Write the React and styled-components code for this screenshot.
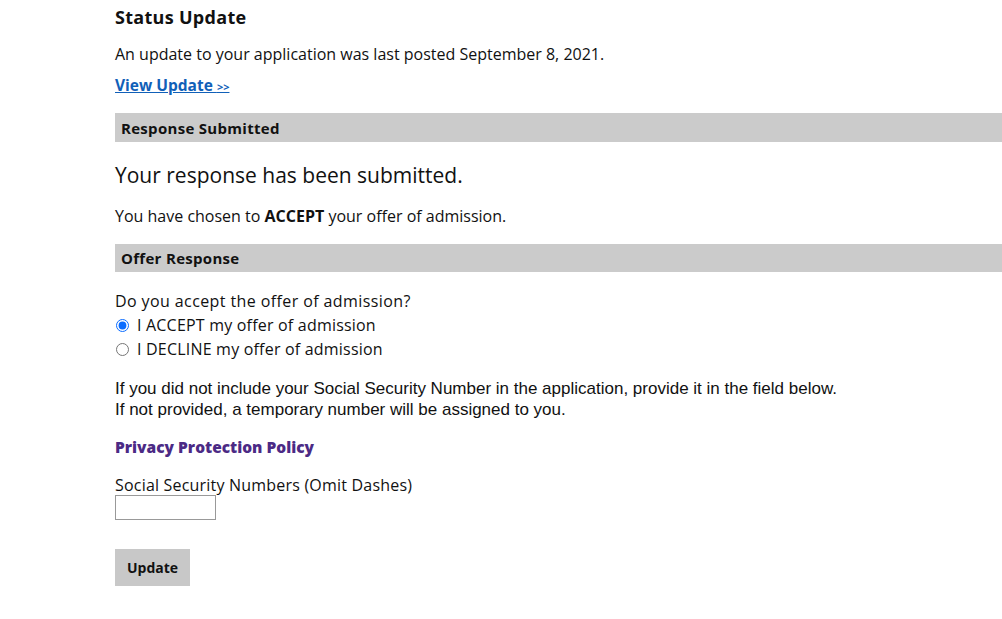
import React from "react";
import styled, { createGlobalStyle } from "styled-components";

const GlobalStyle = createGlobalStyle`
  body {
    margin: 0;
    background: #ffffff;
    color: #111111;
    font-family: "Open Sans", "DejaVu Sans", sans-serif;
  }
`;

const Page = styled.div`
  padding: 7px 0 30px 115px;
`;

const Heading = styled.h2`
  font-size: 18px;
  font-weight: 700;
  line-height: 20px;
  letter-spacing: 0.3px;
  margin: 0;
`;

const Text = styled.p`
  font-size: ${(p) => p.size || 16}px;
  line-height: ${(p) => p.lh || 20}px;
  letter-spacing: ${(p) => p.ls || 0}px;
  margin: ${(p) => p.top || 0}px 0 0 0;
`;

const Link = styled.a`
  display: block;
  margin-top: 11px;
  font-size: 15.5px;
  line-height: 20px;
  font-weight: 700;
  color: #1160b8;
  text-decoration: underline;
  cursor: pointer;

  span {
    font-size: 11px;
  }
`;

const SectionBar = styled.div`
  margin-top: ${(p) => p.top}px;
  height: ${(p) => p.h}px;
  background: #cbcbcb;
  display: flex;
  align-items: center;
  padding-left: 6px;
  font-size: 15px;
  letter-spacing: 0.3px;
  font-weight: 700;
`;

const Options = styled.div`
  display: flex;
  flex-direction: column;
  margin-top: 2px;
`;

const Option = styled.label`
  display: flex;
  align-items: center;
  gap: 8px;
  height: 24px;
  font-size: 16px;
  letter-spacing: 0.2px;

  input {
    margin: 0 0 0 1px;
    width: 13px;
    height: 13px;
    accent-color: #0a6cff;
  }
`;

const Narrow = styled.p`
  margin: 17px 0 0 0;
  font-family: "Liberation Sans", Arial, sans-serif;
  font-size: 17px;
  line-height: 21px;
`;

const Policy = styled.a`
  display: block;
  margin-top: 17px;
  font-size: 15.5px;
  line-height: 20px;
  font-weight: 800;
  color: #4b2a85;
  text-decoration: none;
  cursor: pointer;
`;

const Field = styled.input`
  display: block;
  box-sizing: border-box;
  width: 101px;
  height: 25px;
  margin: 0;
  border: 1px solid #999999;
  background: #ffffff;
`;

const Button = styled.button`
  display: block;
  margin-top: 29px;
  width: 75px;
  height: 37px;
  border: none;
  background: #c8c8c8;
  font-family: inherit;
  font-size: 14px;
  font-weight: 700;
  color: #111111;
`;

export default function App() {
  return (
    <Page>
      <GlobalStyle />
      <Heading>Status Update</Heading>
      <Text top={17}>
        An update to your application was last posted September 8, 2021.
      </Text>
      <Link>
        View Update <span>&gt;&gt;</span>
      </Link>

      <SectionBar top={16} h={29}>
        Response Submitted
      </SectionBar>
      <Text size={21} lh={26} top={20}>
        Your response has been submitted.
      </Text>
      <Text top={18}>
        You have chosen to <b>ACCEPT</b> your offer of admission.
      </Text>

      <SectionBar top={18} h={28}>
        Offer Response
      </SectionBar>
      <Text top={19} ls={0.4}>
        Do you accept the offer of admission?
      </Text>
      <Options>
        <Option>
          <input type="radio" name="offer" defaultChecked />I ACCEPT my offer of
          admission
        </Option>
        <Option>
          <input type="radio" name="offer" />I DECLINE my offer of admission
        </Option>
      </Options>
      <Narrow>
        If you did not include your Social Security Number in the application,
        provide it in the field below.
        <br />
        If not provided, a temporary number will be assigned to you.
      </Narrow>
      <Policy>Privacy Protection Policy</Policy>
      <Text top={18} ls={0.2}>
        Social Security Numbers (Omit Dashes)
      </Text>
      <Field type="text" />
      <Button>Update</Button>
    </Page>
  );
}
